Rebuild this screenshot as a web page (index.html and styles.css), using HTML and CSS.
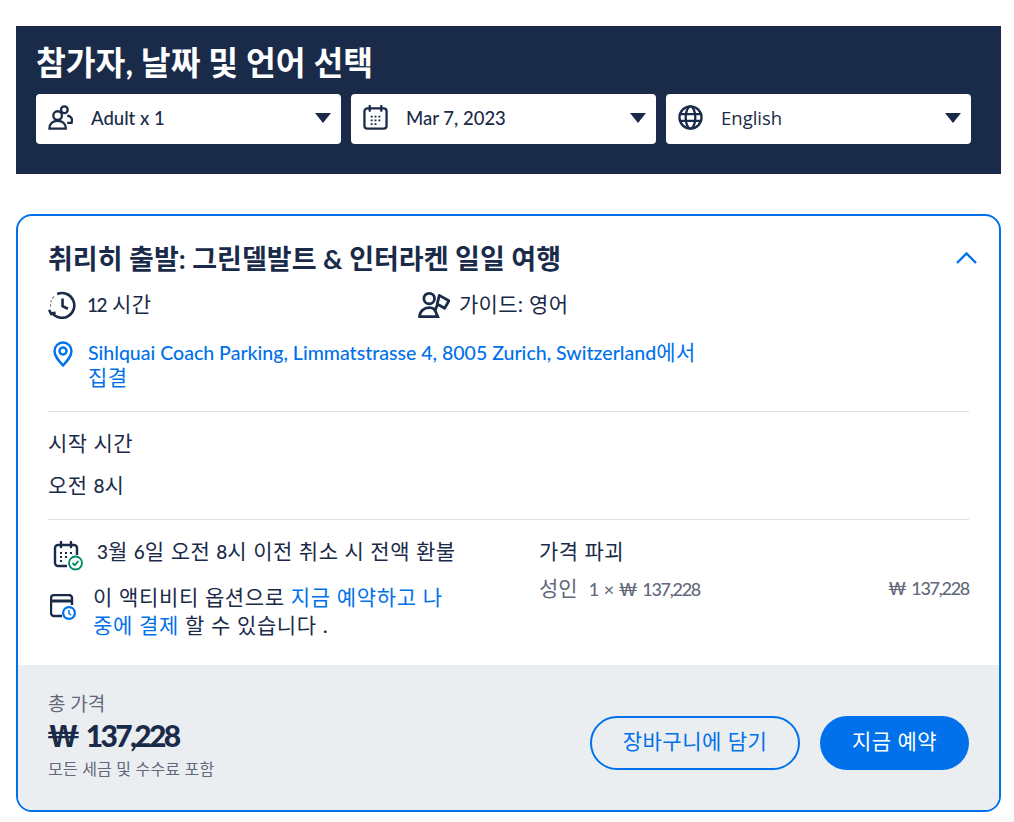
FILE: index.html
```html
<!DOCTYPE html>
<html lang="ko">
<head>
<meta charset="utf-8">
<title>참가자, 날짜 및 언어 선택</title>
<link rel="stylesheet" href="styles.css">
</head>
<body>
<main class="page">
  <section class="picker">
    <h1 class="picker-title">참가자, 날짜 및 언어 선택</h1>
    <div class="picker-row">
      <div class="select">
        <svg class="select-icon" viewBox="0 0 26 26" fill="none" stroke="#1a2b49" stroke-width="2.400"><circle cx="17" cy="5" r="3.500"/><path d="M20 11c3 .5 5 2.500 5 5l-.5 2.500H20"/><circle cx="10" cy="11" r="4.500" fill="#fff"/><path d="M1.500 24.500c0-5 3.500-8 8.500-8s8.500 3 8.500 8z"/></svg>
        <span class="select-label">Adult x 1</span>
        <span class="caret"></span>
      </div>
      <div class="select">
        <svg class="select-icon" viewBox="0 0 26 26" fill="none" stroke="#1a2b49" stroke-width="2.400"><rect x="1.500" y="3.500" width="23" height="21" rx="3"/><path d="M7 1v5M19 1v5" stroke-linecap="round"/><path d="M8 12h2M12 12h2M16 12h2M8 16h2M12 16h2M16 16h2M8 20h2M12 20h2" stroke-width="1.800"/></svg>
        <span class="select-label">Mar 7, 2023</span>
        <span class="caret"></span>
      </div>
      <div class="select">
        <svg class="select-icon" viewBox="0 0 26 26" fill="none" stroke="#1a2b49" stroke-width="2.400"><circle cx="13" cy="13" r="11.500"/><ellipse cx="13" cy="13" rx="5" ry="11.500"/><path d="M2 9.500h22M2 16.500h22"/></svg>
        <span class="select-label select-label-alt">English</span>
        <span class="caret"></span>
      </div>
    </div>
  </section>

  <section class="card">
    <div class="card-body">
      <div class="card-head">
        <h2 class="card-title">취리히 출발: 그린델발트 &amp; 인터라켄 일일 여행</h2>
        <svg class="chevron" viewBox="0 0 21 13" fill="none" stroke="#0071eb" stroke-width="2.400"><path d="M1 12l9.500-9.500L20 12"/></svg>
      </div>
      <div class="facts">
        <div class="fact">
          <svg class="fact-icon" viewBox="0 0 26 26" fill="none" stroke="#1a2b49" stroke-width="2.400"><path d="M8.500 2.800A11.500 11.500 0 1 1 3.500 20"/><path d="M1 17.500l2 4 4-1.500" stroke-linejoin="round"/><path d="M13.500 7v7l5 2.500"/><path d="M4.500 5.800l.5.500M2.500 9.500h.6M2 13.500h.6"/></svg>
          <span class="fact-text"><span class="num fact-num">12</span> 시간</span>
        </div>
        <div class="fact fact-guide">
          <svg class="fact-icon fact-icon-wide" viewBox="0 0 30 26" fill="none" stroke="#1a2b49" stroke-width="2.600"><circle cx="10.500" cy="7" r="5"/><path d="M1.500 24c0-5 4-8.500 9-8.500 2 0 3.500.5 5 1.500l3 7z"/><path d="M15.500 19l3-7" /><path d="M20 4l9 5-4 7-7-4z" stroke-linejoin="round" fill="#fff"/></svg>
          <span class="fact-text">가이드: 영어</span>
        </div>
      </div>
      <div class="meet">
        <svg class="meet-icon" viewBox="0 0 20 26" fill="none" stroke="#0071eb" stroke-width="2.400"><path d="M10 24.500C5 19 1.500 15 1.500 10a8.500 8.500 0 0 1 17 0c0 5-3.500 9-8.500 14.500z"/><circle cx="10" cy="10" r="3.500"/></svg>
        <a class="meet-link"><span class="meet-place">Sihlquai Coach Parking, Limmatstrasse 4, 8005 Zurich, Switzerland</span>에서 집결</a>
      </div>
      <div class="start">
        <p class="start-label">시작 시간</p>
        <p class="start-value">오전 <span class="num">8</span>시</p>
      </div>
      <div class="details">
        <div class="policy">
          <div class="policy-row">
            <svg class="policy-icon" viewBox="0 0 30 30" fill="none" stroke="#1a2b49" stroke-width="2.400"><path d="M14 25H5a3 3 0 0 1-3-3V7a3 3 0 0 1 3-3h16a3 3 0 0 1 3 3v7"/><path d="M8 1v5M18 1v5" stroke-linecap="round"/><path d="M7 12h2M12 12h2M17 12h2M7 16h2M12 16h2M7 20h2" stroke-width="1.800"/><circle cx="22.500" cy="22" r="6.500" fill="#fff" stroke="#008768" stroke-width="1.800"/><path d="M19.500 22l2.200 2.200 3.800-4" stroke="#008768" stroke-width="1.800"/></svg>
            <span class="policy-text policy-text-first"><span class="num">3</span>월 <span class="num">6</span>일 오전 <span class="num">8</span>시 이전 취소 시 전액 환불</span>
          </div>
          <div class="policy-row policy-row-pay">
            <svg class="pay-icon" viewBox="0 0 27 27" fill="none" stroke="#1a2b49" stroke-width="2.400"><path d="M12 22H4a3 3 0 0 1-3-3V4a3 3 0 0 1 3-3h15a3 3 0 0 1 3 3v7"/><path d="M1 7h21" stroke-width="3"/><circle cx="19" cy="19" r="7" fill="#0071eb" stroke="none"/><circle cx="19" cy="19" r="4.800" fill="#fff" stroke="none"/><path d="M19 16v3.500l2 1.500" stroke="#0071eb" stroke-width="1.500"/></svg>
            <span class="policy-text">이 액티비티 옵션으로 <a class="inline-link">지금 예약하고 나중에 결제</a> 할 수 있습니다 .</span>
          </div>
        </div>
        <div class="price">
          <p class="price-title">가격 파괴</p>
          <div class="price-line">
            <span><span class="price-ko">성인</span><span class="price-qty">1 × ₩ <span class="price-num">137,228</span></span></span>
            <span>₩ <span class="price-num">137,228</span></span>
          </div>
        </div>
      </div>
    </div>
    <div class="card-foot">
      <div class="total">
        <div class="total-label">총 가격</div>
        <div class="total-value">₩ <span class="total-num">137,228</span></div>
        <div class="total-note">모든 세금 및 수수료 포함</div>
      </div>
      <div class="actions">
        <button class="btn btn-outline">장바구니에 담기</button>
        <button class="btn btn-solid">지금 예약</button>
      </div>
    </div>
  </section>
</main>
</body>
</html>
```

FILE: styles.css
```css
* { box-sizing: border-box; }
html, body { margin: 0; padding: 0; }
body {
  background: #fff;
  color: #1a2b49;
  font-family: Lato, "Noto Sans CJK KR", sans-serif;
  font-size: 21px;
  letter-spacing: .5px;
  height: 822px;
  overflow: hidden;
}
.page { padding: 26px 13px 0 16px; height: 822px; background: linear-gradient(#fff 816px, #fafafa 816px); }
p { margin: 0; }
.num { font-size: 19px; font-weight: 500; letter-spacing: 0; }
.fact-num { letter-spacing: -1.500px; }

.picker { background: #1a2b49; height: 148px; padding: 15px 30px 0 20px; }
.picker-title { margin: 0; color: #fff; font-size: 32.400px; font-weight: 700; line-height: 43px; letter-spacing: 0; }
.picker-row { display: flex; gap: 10px; margin-top: 10px; }
.select {
  flex: 1 1 0;
  height: 50px;
  background: #fff;
  border-radius: 4px;
  display: flex;
  align-items: center;
  padding: 0 10px 3px 12px;
}
.select-icon { width: 25px; height: 25px; flex: none; }
.select-label { margin-left: 18px; flex: 1; font-size: 18.500px; font-weight: 500; letter-spacing: 0; }
.select-label-alt { font-family: "Open Sans", sans-serif; font-size: 18.500px; }
.caret {
  width: 0; height: 0;
  border-left: 8px solid transparent;
  border-right: 8px solid transparent;
  border-top: 10px solid #1a2b49;
}

.card {
  margin-top: 40px;
  height: 598px;
  border: 2px solid #0071eb;
  border-radius: 16px;
  overflow: hidden;
  display: flex;
  flex-direction: column;
}
.card-body { flex: 1; padding: 25px 30px 0; }
.card-head { display: flex; justify-content: space-between; align-items: center; }
.card-title { margin: 0; font-size: 27px; font-weight: 700; line-height: 36px; letter-spacing: 0; }
.chevron { width: 21px; height: 13px; margin: -3px -8px 0 0; }

.facts { display: flex; margin-top: 12px; }
.fact { display: flex; align-items: center; width: 371px; height: 32px; }
.fact-icon { width: 28px; height: 28px; flex: none; }
.fact-icon-wide { width: 32px; margin-left: -1px; }
.fact-text { margin-left: 11px; line-height: 26px; position: relative; top: -1px; }
.fact-guide .fact-text { margin-left: 9px; letter-spacing: .3px; }

.meet { display: flex; width: 660px; margin-top: 19px; color: #0071eb; padding-bottom: 22px; }
.meet-icon { width: 20px; height: 26px; margin: 1px 15px 0 5px; flex: none; }
.meet-link { line-height: 24px; }
.meet-place { font-size: 19.550px; font-weight: 500; letter-spacing: 0; }

.start { border-top: 1px solid #dcdfe4; padding-top: 18px; height: 108px; }
.start-label { line-height: 26px; }
.start-value { margin-top: 16px; line-height: 26px; }

.details { border-top: 1px solid #dcdfe4; display: flex; padding-top: 18px; }
.policy { width: 491px; }
.policy-row { display: flex; align-items: flex-start; }
.policy-icon { width: 30px; height: 30px; flex: none; margin: 3px 13px 0 5px; }
.policy-text { line-height: 28px; width: 352px; letter-spacing: .65px; }
.policy-text-first { width: 380px; margin-left: 1px; line-height: 26px; letter-spacing: .55px; }
.policy-row-pay { margin-top: 12px; }
.pay-icon { width: 27px; height: 27px; flex: none; margin: 11px 16px 0 2px; }
.inline-link { color: #0071eb; }

.price { flex: 1; }
.price-title { line-height: 26px; }
.price-line {
  display: flex;
  justify-content: space-between;
  margin-top: 11px;
  color: #63687a;
  font-size: 18px;
  font-weight: 500;
  line-height: 26px;
  letter-spacing: 0;
}
.price-ko { font-size: 21px; font-weight: 400; }
.price-qty { margin-left: 11px; }
.price-num { letter-spacing: -1.300px; }

.card-foot {
  height: 145px;
  background: #ebeef1;
  padding: 26px 30px 0;
  display: flex;
  justify-content: space-between;
}
.total-label { color: #63687a; font-size: 19px; line-height: 25px; letter-spacing: 0; }
.total-value { font-size: 30px; font-weight: 900; line-height: 40px; letter-spacing: 0; margin: -1px 0 0 -1px; word-spacing: -1px; }
.total-num { letter-spacing: -2.700px; }
.total-note { color: #63687a; font-size: 16px; line-height: 20px; margin-top: 4px; letter-spacing: .2px; }
.actions { display: flex; gap: 20px; margin-top: 25px; }
.btn {
  height: 54px;
  border-radius: 27px;
  font-family: inherit;
  font-size: 21px;
  letter-spacing: .5px;
  padding: 0 0 6px;
}
.btn-outline { width: 210px; background: transparent; border: 2px solid #0071eb; color: #0071eb; }
.btn-solid { width: 149px; background: #0071eb; border: 0; color: #fff; }
```
